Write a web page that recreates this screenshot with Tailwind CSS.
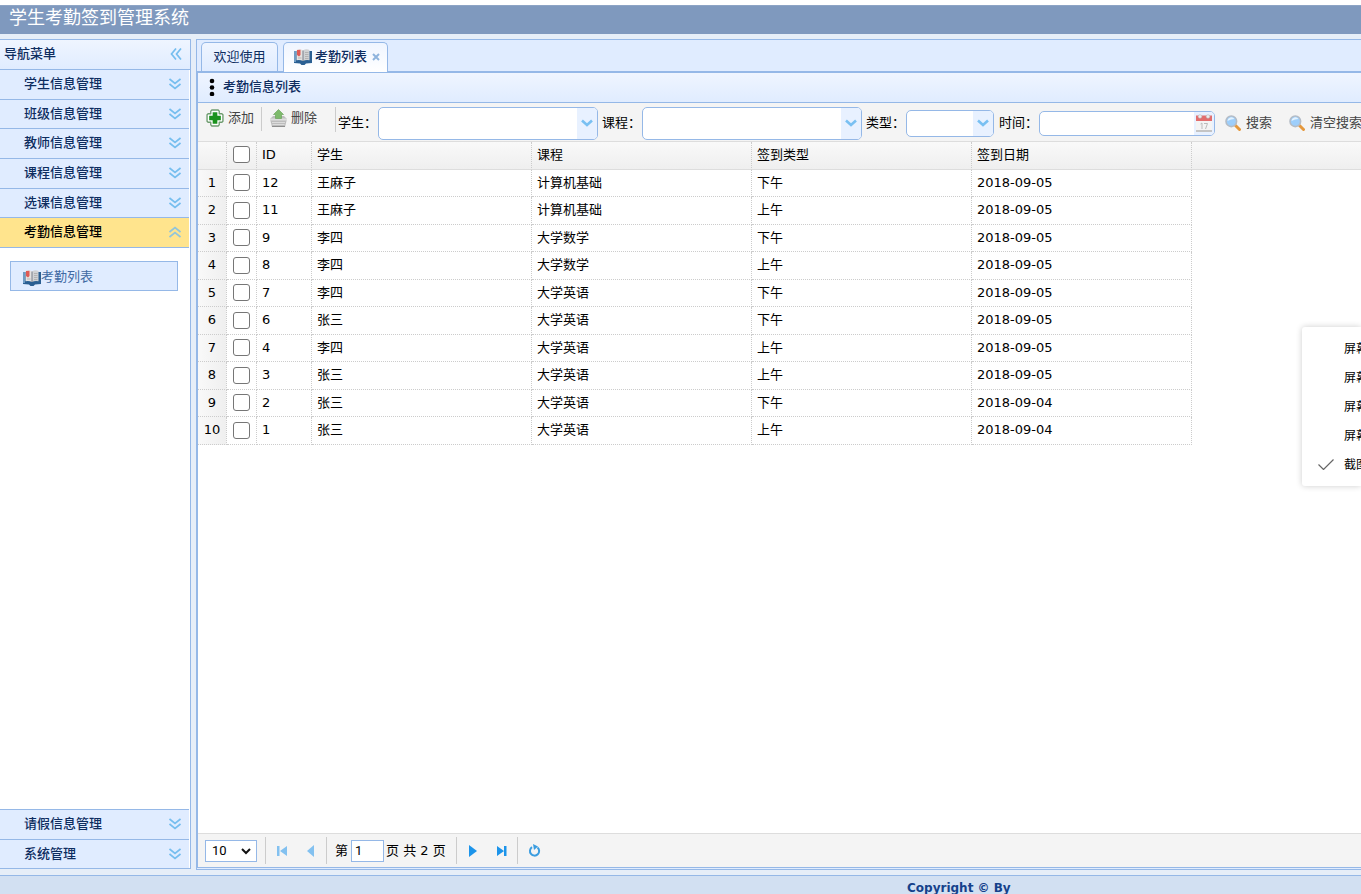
<!DOCTYPE html>
<html lang="zh-CN">
<head>
<meta charset="utf-8">
<title>学生考勤签到管理系统</title>
<script src="https://cdn.jsdelivr.net/npm/@tailwindcss/browser@4"></script>
</head>
<body class="relative flex h-screen flex-col overflow-hidden bg-[#e6eef8] font-['DejaVu_Sans','Noto_Sans_CJK_SC',sans-serif] text-[13px] leading-5 text-black">
<svg class="hidden">
  <symbol id="down" viewBox="0 0 12 12"><path d="M.5 1l5.500 4.500L11.500 1M.5 6l5.500 4.500L11.500 6" fill="none" stroke="#76beef" stroke-width="1.700"/></symbol>
  <symbol id="caret" viewBox="0 0 12 8"><path d="M1 1.500l5 4.500 5-4.500" fill="none" stroke="#79c0f2" stroke-width="2.600"/></symbol>
  <symbol id="book" viewBox="0 0 18 16">
    <path d="M0 2h18v12l-6 .5-1.500 1.500h-3L6 14.500 0 14z" fill="#2a5f92"/>
    <path d="M0 2h2v11H0z" fill="#6f9cc4"/>
    <path d="M2.500 1Q6-.5 9 1.500V12Q6 10.500 2.500 11.300z" fill="#e4e2e0"/>
    <path d="M9 1.500Q12-.5 15.500 1v10.300Q12 10.500 9 12z" fill="#d0d2d4"/>
    <path d="M9 1.500V12" stroke="#777f8a" stroke-width="1"/>
    <path d="M3 1l3.500-.3V6L5 7.500 3 6z" fill="#e05a54"/>
    <path d="M11 3.500h3.500M11 5.500h3.500M11 7.500h3.500M11 9.500h3.500M4 9h3.500" stroke="#aaa" stroke-width=".8"/>
  </symbol>
  <symbol id="search" viewBox="0 0 16 16">
    <path d="M10.500 10.500l4 4" stroke="#e5983c" stroke-width="3" stroke-linecap="round"/>
    <circle cx="6.300" cy="6.300" r="5.300" fill="#9dcefb" stroke="#b4bcc6" stroke-width="1.600"/>
    <path d="M2.500 6a3.800 3.800 0 0 1 7-2Q6 4 2.500 6z" fill="#e4f3ff"/>
  </symbol>
</svg>

<header class="h-[34px] shrink-0 border-t-[5px] border-white">
  <h1 class="h-full border-t border-[#8da4c5] bg-[#7f99be] pl-[9px] text-[18px] leading-[24px] text-white">学生考勤签到管理系统</h1>
</header>

<div class="flex min-h-0 flex-1 pt-[5px]">
  <aside class="mr-[5px] mb-px flex w-[191px] shrink-0 flex-col border-y border-r border-[#95b8e7] bg-white">
    <div class="flex h-[30px] shrink-0 items-center justify-between border-b border-[#95b8e7] bg-linear-to-b from-[#eff5ff] to-[#e0ecff] pr-2 pb-px pl-1">
      <h2 class="font-medium text-[#0e2d5f]">导航菜单</h2>
      <button aria-label="折叠"><svg class="size-3 rotate-90"><use href="#down"/></svg></button>
    </div>
    <nav class="mr-px flex min-h-0 flex-1 flex-col font-medium text-[#0e2d5f]">
      <div class="flex h-[178px] shrink-0 flex-col">
        <button class="flex flex-1 items-center justify-between border-b border-[#95b8e7] bg-[#e0ecff] pr-2 pb-px pl-6">学生信息管理<svg class="size-3"><use href="#down"/></svg></button>
        <button class="flex flex-1 items-center justify-between border-b border-[#95b8e7] bg-[#e0ecff] pr-2 pb-px pl-6">班级信息管理<svg class="size-3"><use href="#down"/></svg></button>
        <button class="flex flex-1 items-center justify-between border-b border-[#95b8e7] bg-[#e0ecff] pr-2 pb-px pl-6">教师信息管理<svg class="size-3"><use href="#down"/></svg></button>
        <button class="flex flex-1 items-center justify-between border-b border-[#95b8e7] bg-[#e0ecff] pr-2 pb-px pl-6">课程信息管理<svg class="size-3"><use href="#down"/></svg></button>
        <button class="flex flex-1 items-center justify-between border-b border-[#95b8e7] bg-[#e0ecff] pr-2 pb-px pl-6">选课信息管理<svg class="size-3"><use href="#down"/></svg></button>
        <button class="flex flex-1 items-center justify-between border-b border-[#95b8e7] bg-[#ffe48d] pr-2 pb-px pl-6 text-black">考勤信息管理<svg class="size-3 rotate-180 opacity-80"><use href="#down"/></svg></button>
      </div>
      <div class="flex-1 pt-[13px] pr-[11px] pl-[10px]">
        <a href="#" class="flex h-[30px] items-center border border-[#95b8e7] bg-[#e0ecff] pt-[2px] pl-3 font-normal text-[#416aa3]"><svg class="mt-px h-4 w-[18px]"><use href="#book"/></svg>考勤列表</a>
      </div>
      <button class="flex h-[30px] shrink-0 items-center justify-between border-t border-[#95b8e7] bg-[#e0ecff] pr-2 pb-px pl-6">请假信息管理<svg class="size-3"><use href="#down"/></svg></button>
      <button class="flex h-[29px] shrink-0 items-center justify-between border-t border-[#95b8e7] bg-[#e0ecff] pr-2 pl-6">系统管理<svg class="size-3"><use href="#down"/></svg></button>
    </nav>
  </aside>

  <main class="flex min-w-0 flex-1 flex-col border-y border-l border-[#95b8e7] bg-[#e0ecff]">
    <div class="flex h-[33px] shrink-0 items-end gap-[5px] border-b-2 border-[#95b8e7] pl-1">
      <button class="h-[29px] w-[77px] rounded-t-[5px] border border-b-0 border-[#95b8e7] bg-linear-to-b from-[#eff5ff] to-[#e0ecff] pb-px text-[#0e2d5f]">欢迎使用</button>
      <div class="-mb-px flex h-[30px] w-[105px] items-center rounded-t-[5px] border border-b-0 border-[#95b8e7] bg-linear-to-b from-[#eff5ff] to-white pb-[2px] pl-[10px] font-medium text-[#0e2d5f]">
        <svg class="mr-[3px] h-4 w-[18px]"><use href="#book"/></svg>考勤列表
        <button aria-label="关闭" class="ml-[5px]"><svg class="size-2" viewBox="0 0 8 8"><path d="M1 1l6 6M7 1L1 7" stroke="#8fb4dd" stroke-width="2"/></svg></button>
      </div>
    </div>

    <section class="mb-px flex min-h-0 flex-1 flex-col border-b border-l border-[#95b8e7] bg-white">
      <div class="flex h-[30px] shrink-0 items-center border-b border-[#95b8e7] bg-linear-to-b from-[#eff5ff] to-[#e0ecff] pb-px pl-[11px]">
        <svg class="h-[18px] w-[6px]" viewBox="0 0 6 18"><circle cx="3" cy="3" r="2.300"/><circle cx="3" cy="9.500" r="2.300"/><circle cx="3" cy="16" r="2.300"/></svg>
        <h2 class="ml-2 font-medium text-[#0e2d5f]">考勤信息列表</h2>
      </div>

      <form class="flex h-[39px] shrink-0 items-center overflow-hidden border-b border-[#ddd] bg-[#f4f4f4] pt-[2px] pl-2 whitespace-nowrap [&>*]:shrink-0">
        <button type="button" class="mb-[10px] flex items-center gap-1 text-[#444]">
          <svg class="size-[18px]" viewBox="0 0 17 17"><path d="M5.500 1h6l1 1v2.500H15l1 1v6l-1 1h-2.500V15l-1 1h-6l-1-1v-2.500H2l-1-1v-6l1-1h2.500V2z" fill="#fff" stroke="#6f9c70" stroke-width="1.300" stroke-linejoin="round"/><path d="M6.300 3h4.400v3.300H14v4.400h-3.300V14H6.300v-3.300H3V6.300h3.300z" fill="#1a921d"/></svg>添加
        </button>
        <span class="mb-2 ml-[7px] h-6 border-l border-[#ccc]"></span>
        <button type="button" class="mb-[10px] ml-2 flex items-center gap-1 text-[#444]">
          <svg class="h-[18px] w-[17px]" viewBox="0 0 17 18"><path d="M3 7h11l3 3-2 8H2L0 10z" fill="#bdbdbd"/><path d="M0 9.500h17v2H0z" fill="#dedede"/><path d="M2 13.500h13M2.500 15.500h12" stroke="#dcdcdc"/><path d="M2 17.500h13" stroke="#8e8e8e"/><path d="M8.500.5l5 5h-2v4h-6v-4h-2z" fill="#7dba6b" stroke="#6ba45d" stroke-width=".7"/></svg>删除
        </button>
        <span class="mb-2 ml-[18px] h-[25px] border-l border-[#ccc]"></span>
        <label for="student" class="ml-[2px] w-10">学生：</label>
        <span class="relative h-[33px] w-[220px]">
          <select id="student" class="size-full appearance-none rounded-[5px] border border-[#95b8e7] bg-white"></select>
          <span class="pointer-events-none absolute inset-y-px right-px flex w-5 items-center justify-center rounded-r-[4px] bg-[#e8f1ff]"><svg class="h-2 w-3"><use href="#caret"/></svg></span>
        </span>
        <label for="course" class="ml-1 w-10">课程：</label>
        <span class="relative h-[33px] w-[220px]">
          <select id="course" class="size-full appearance-none rounded-[5px] border border-[#95b8e7] bg-white"></select>
          <span class="pointer-events-none absolute inset-y-px right-px flex w-5 items-center justify-center rounded-r-[4px] bg-[#e8f1ff]"><svg class="h-2 w-3"><use href="#caret"/></svg></span>
        </span>
        <label for="type" class="ml-1 w-10">类型：</label>
        <span class="relative h-[27px] w-[88px]">
          <select id="type" class="size-full appearance-none rounded-[5px] border border-[#95b8e7] bg-white"></select>
          <span class="pointer-events-none absolute inset-y-px right-px flex w-5 items-center justify-center rounded-r-[4px] bg-[#e8f1ff]"><svg class="h-2 w-3"><use href="#caret"/></svg></span>
        </span>
        <label for="date" class="ml-[5px] w-10">时间：</label>
        <span class="relative h-[25px] w-[176px]">
          <input id="date" type="text" class="size-full rounded-[5px] border border-[#95b8e7] bg-white px-1">
          <span class="pointer-events-none absolute inset-y-px right-px flex w-5 items-center justify-center rounded-r-[4px] bg-[#e8f1ff]"><svg class="h-[18px] w-4" viewBox="0 0 16 18"><path d="M0 2h16v15H0z" fill="#f4f4f4"/><path d="M0 16h16v2H0z" fill="#c4c4c4"/><path d="M0 1.500h16V7H0z" fill="#e26d6d"/><circle cx="4" cy="2.500" r="1.800" fill="#eee" stroke="#bbb" stroke-width=".6"/><circle cx="12" cy="2.500" r="1.800" fill="#eee" stroke="#bbb" stroke-width=".6"/><path d="M4.500 10l1.500-1v6M8 9.500h3.500L9.500 15" fill="none" stroke="#bbb"/></svg></span>
        </span>
        <button type="button" class="ml-[10px] flex items-center gap-[5px] text-[#444]"><svg class="size-4"><use href="#search"/></svg>搜索</button>
        <button type="button" class="ml-[17px] flex items-center gap-[5px] text-[#444]"><svg class="size-4"><use href="#search"/></svg>清空搜索</button>
      </form>

      <div class="min-h-0 flex-1">
        <table class="w-full table-fixed border-separate border-spacing-0 text-left">
          <colgroup><col class="w-[29px]"><col class="w-[30px]"><col class="w-[55px]"><col class="w-[220px]"><col class="w-[220px]"><col class="w-[220px]"><col class="w-[220px]"><col></colgroup>
          <thead class="[&_th]:border-b [&_th]:border-b-[#ddd] [&_th]:bg-linear-to-b [&_th]:from-[#f9f9f9] [&_th]:to-[#efefef] [&_th]:p-0 [&_th]:pb-[2px] [&_th]:pl-[5px] [&_th]:font-normal [&_th:not(:last-child)]:border-r [&_th:not(:last-child)]:[border-right-style:dotted] [&_th:not(:last-child)]:border-r-[#ccc]">
            <tr class="h-7"><th></th><th><input type="checkbox" aria-label="全选" class="ml-px block size-[17px] appearance-none rounded-[3px] border border-[#767676] bg-white"></th><th>ID</th><th>学生</th><th>课程</th><th>签到类型</th><th>签到日期</th><th></th></tr>
          </thead>
          <tbody id="rows"></tbody>
        </table>
      </div>

      <div class="flex h-[34px] shrink-0 items-center border-t border-[#ddd] bg-[#f4f4f4] pl-[7px]">
        <span class="relative h-[22px] w-[52px]">
          <select aria-label="每页条数" class="block size-full appearance-none border border-[#95b8e7] bg-white pl-[6px] font-['Roboto',sans-serif] text-[13px] leading-5"><option>10</option></select>
          <svg class="pointer-events-none absolute top-[8px] right-[6px] h-[7px] w-[10px]" viewBox="0 0 10 7"><path d="M1 1l4 4 4-4" fill="none" stroke="#111" stroke-width="2"/></svg>
        </span>
        <span class="ml-2 h-[27px] border-l border-[#ccc]"></span>
        <button aria-label="首页" class="ml-[11px]"><svg class="h-3 w-[10px]" viewBox="0 0 10 12"><path d="M0 1h2.500v10H0zM10 1v10L3 6z" fill="#83c1f0"/></svg></button>
        <button aria-label="上一页" class="ml-5"><svg class="h-3 w-[7px]" viewBox="0 0 7 12"><path d="M7 0v12L0 6z" fill="#83c1f0"/></svg></button>
        <span class="ml-3 h-[27px] border-l border-[#ccc]"></span>
        <label for="page" class="ml-2 w-4">第</label>
        <input id="page" type="text" value="1" class="h-[22px] w-[33px] border border-[#95b8e7] bg-white pl-[3px] font-['Roboto',sans-serif]">
        <span class="ml-[2px]">页 共 2 页</span>
        <span class="ml-[10px] h-[27px] border-l border-[#ccc]"></span>
        <button aria-label="下一页" class="ml-3"><svg class="h-3 w-2" viewBox="0 0 8 12"><path d="M0 0v12l8-6z" fill="#1c94ea"/></svg></button>
        <button aria-label="末页" class="ml-5"><svg class="h-3 w-[10px]" viewBox="0 0 10 12"><path d="M0 1v10l7-5zM7 1h2.500v10H7z" fill="#1c94ea"/></svg></button>
        <span class="ml-[10px] h-[27px] border-l border-[#ccc]"></span>
        <button aria-label="刷新" class="ml-[10px]"><svg class="size-[13px]" viewBox="0 0 13 13"><path d="M4 3.200a4.600 4.600 0 1 0 5.500.3" fill="none" stroke="#3b9de0" stroke-width="2"/><path d="M5 0l5 2.500L6 6z" fill="#3b9de0"/></svg></button>
      </div>
    </section>
  </main>
</div>

<footer class="mt-[5px] h-[19px] shrink-0 overflow-hidden border-t border-[#95b8e7] bg-[#d2e0f2] pt-[2px] pl-[907px] font-['DejaVu_Sans',sans-serif] text-[12px] font-bold text-[#15428b]">Copyright © By</footer>

<ul class="absolute top-[327px] right-0 w-[59px] overflow-hidden rounded-l-[3px] bg-white pt-2 pb-[6px] text-[12px] leading-[29px] whitespace-nowrap shadow-[0_0_6px_#0003] [&>li]:pl-[42px]">
  <li>屏幕</li><li>屏幕</li><li>屏幕</li><li>屏幕</li>
  <li class="relative"><svg class="absolute top-2 left-4 h-[11px] w-4" viewBox="0 0 16 11"><path d="M.5 5.500l5 5L15.500.5" fill="none" stroke="#666" stroke-width="1.200"/></svg>截图</li>
</ul>

<script>
const data = [
  [12,'王麻子','计算机基础','下午','2018-09-05'],
  [11,'王麻子','计算机基础','上午','2018-09-05'],
  [9,'李四','大学数学','下午','2018-09-05'],
  [8,'李四','大学数学','上午','2018-09-05'],
  [7,'李四','大学英语','下午','2018-09-05'],
  [6,'张三','大学英语','下午','2018-09-05'],
  [4,'李四','大学英语','上午','2018-09-05'],
  [3,'张三','大学英语','上午','2018-09-05'],
  [2,'张三','大学英语','下午','2018-09-04'],
  [1,'张三','大学英语','上午','2018-09-04']
];
const cell = 'border-r border-b border-dotted border-[#ccc] p-0 pb-px pl-[5px]';
document.getElementById('rows').innerHTML = data.map((row, i) =>
  `<tr class="h-[27px] even:h-[28px]">
    <td class="border-r border-b border-dotted border-[#ccc] bg-linear-to-r from-[#f9f9f9] to-[#efefef] p-0 pb-px text-center">${i + 1}</td>
    <td class="${cell}"><input type="checkbox" aria-label="选择 ${row[0]}" class="ml-px block size-[17px] appearance-none rounded-[3px] border border-[#767676] bg-white"></td>
    ${row.map(v => `<td class="${cell}">${v}</td>`).join('')}
  </tr>`).join('');
</script>
</body>
</html>
